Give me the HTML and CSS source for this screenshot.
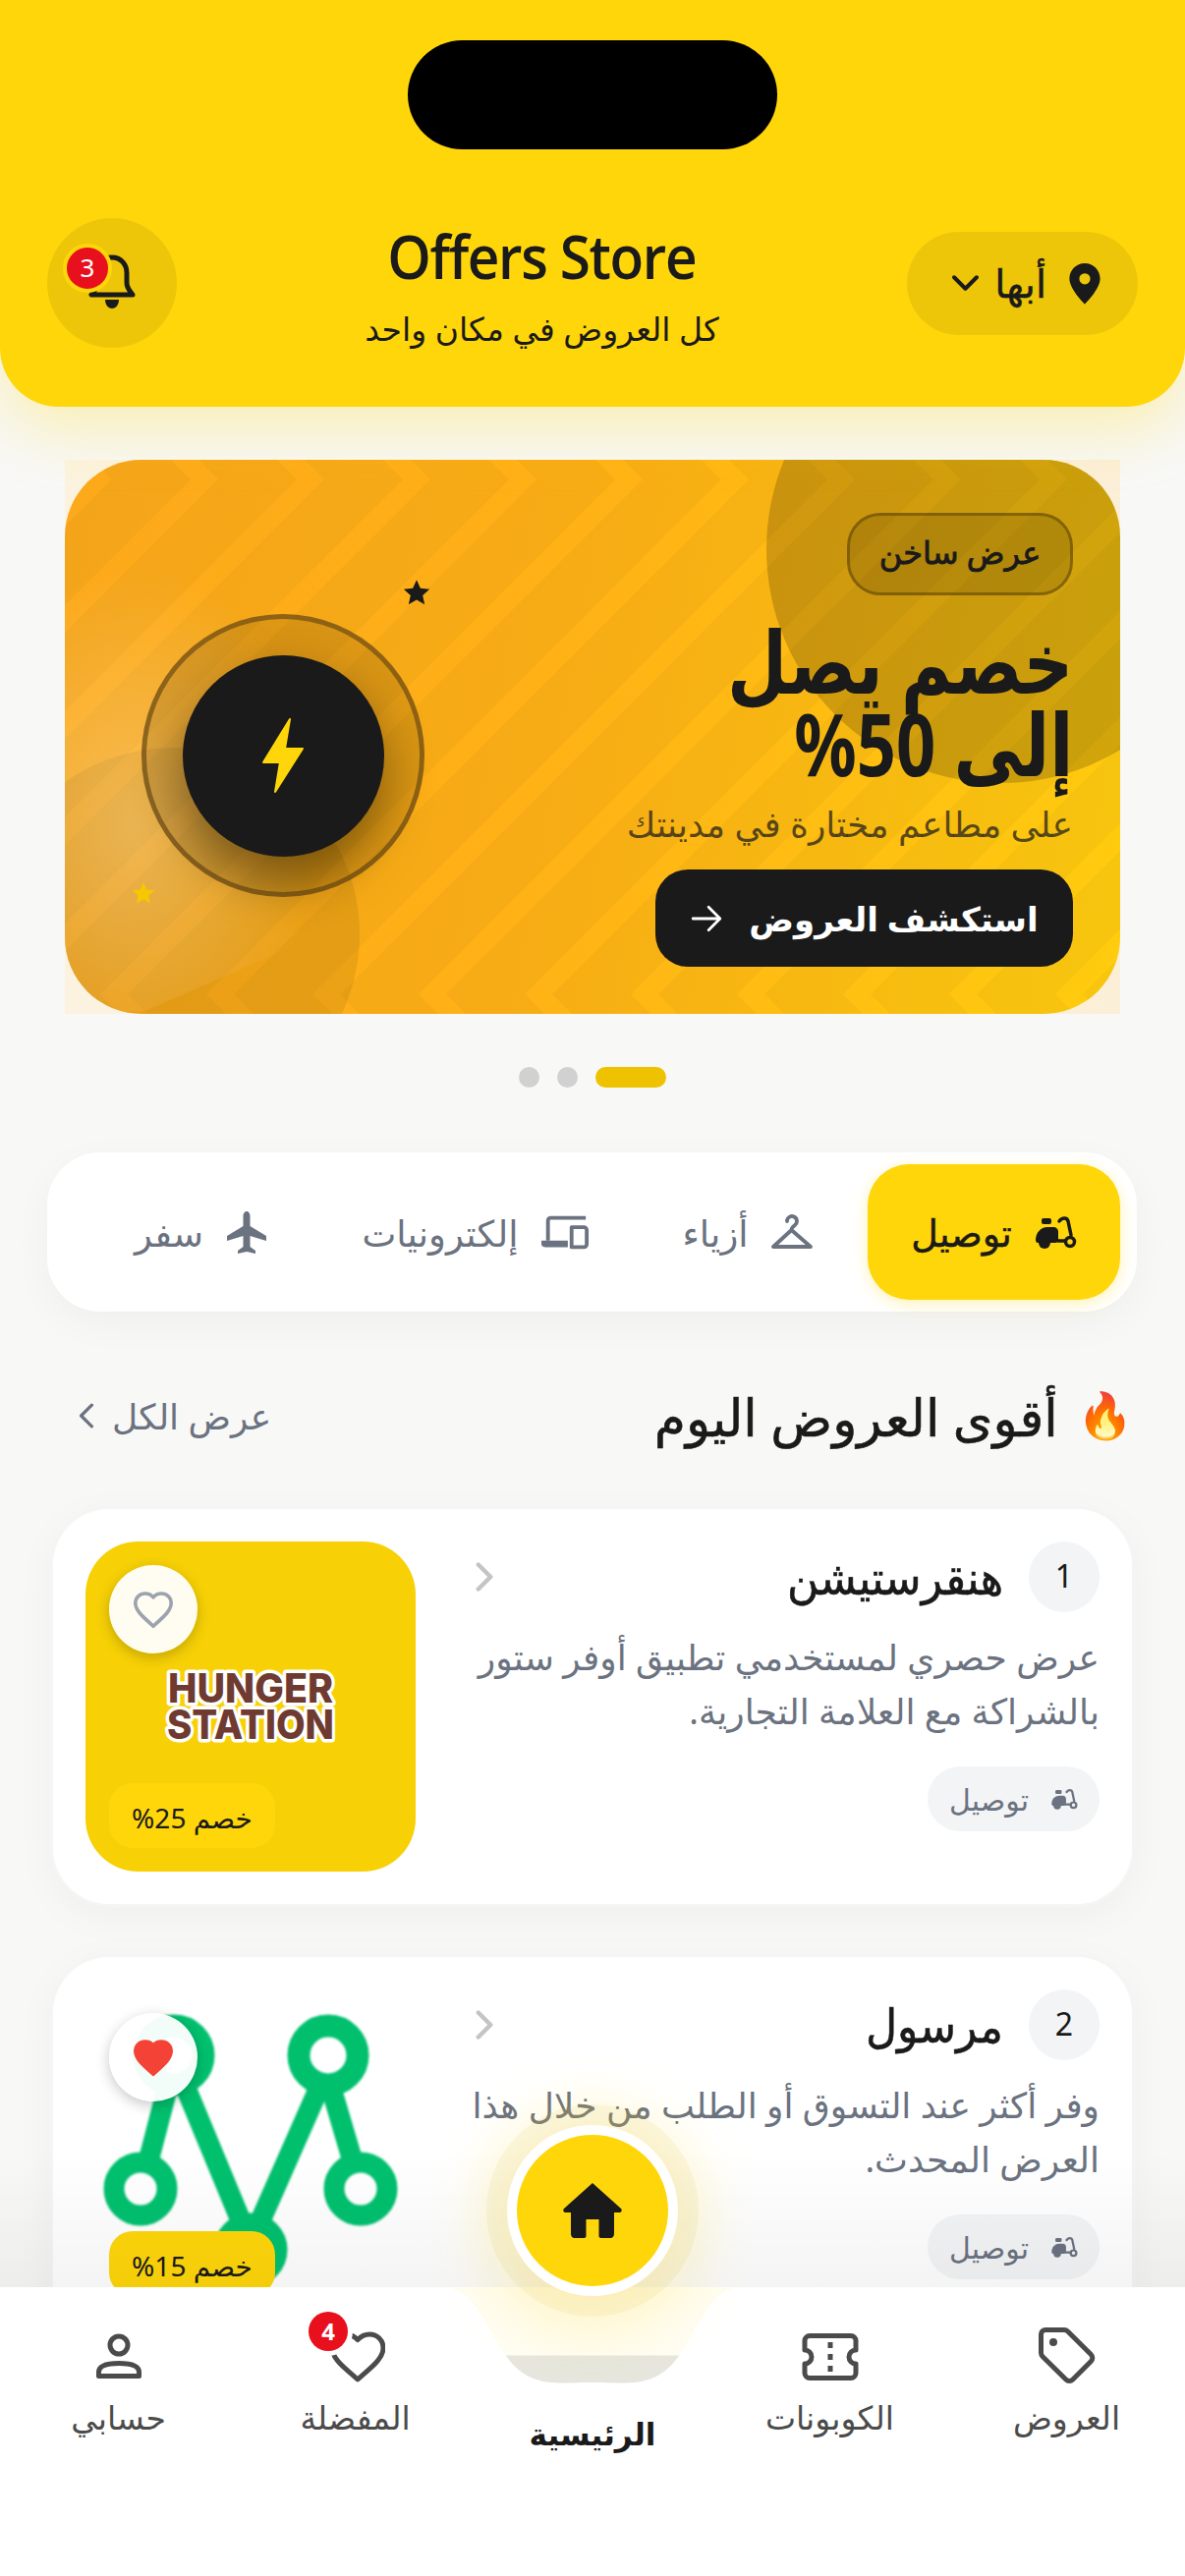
FILE: index.html
```html
<!DOCTYPE html>
<html lang="ar" dir="rtl">
<head>
<meta charset="utf-8">
<title>Offers Store</title>
<link rel="stylesheet" href="styles.css">
</head>
<body>
<div class="screen">
  <header class="top">
    <div class="island"></div>
    <div class="top-row">
      <button class="loc">
        <svg class="ic-pin" viewBox="0 0 24 24"><path fill="#1a1a1a" fill-rule="evenodd" d="M12 2C7.600 2 4.200 5.500 4.200 9.900 4.200 15.200 12 22.800 12 22.800s7.800-7.600 7.800-12.900C19.800 5.500 16.400 2 12 2zm0 10.700a2.800 2.800 0 1 1 0-5.600 2.800 2.800 0 0 1 0 5.600z"/></svg>
        <span class="loc-name">أبها</span>
        <svg class="ic-down" viewBox="0 0 24 14"><path d="M2 2l10 10L22 2" fill="none" stroke="#1a1a1a" stroke-width="3.500" stroke-linecap="round" stroke-linejoin="round"/></svg>
      </button>
      <div class="brand">
        <h1 class="brand-name" dir="ltr">Offers Store</h1>
        <p class="brand-sub">كل العروض في مكان واحد</p>
      </div>
      <div class="bell">
        <svg class="ic-bell" viewBox="0 0 48 60"><path fill="none" stroke="#1a1a1a" stroke-width="5" stroke-linecap="round" stroke-linejoin="round" d="M24 4c-9 0-15 7-15 16v10c0 5-3 8-6 12h42c-3-4-6-7-6-12V20c0-9-6-16-15-16z"/><path fill="#1a1a1a" d="M17 47h14c0 5-3 9-7 9s-7-4-7-9z"/></svg>
        <span class="bell-badge">3</span>
      </div>
    </div>
  </header>

  <section class="slide-wrap">
    <div class="slide">
      <svg class="stripes" viewBox="0 0 1074 564" preserveAspectRatio="none">
        <defs>
          <pattern id="zig" patternUnits="userSpaceOnUse" width="108" height="564">
            <g fill="#000" fill-opacity=".032">
              <path id="st" d="M0 0L20 20-504 544-484 564H-564L-584 544-60 20-80 0z"/>
              <use href="#st" x="108"/><use href="#st" x="216"/><use href="#st" x="324"/><use href="#st" x="432"/><use href="#st" x="540"/><use href="#st" x="648"/>
            </g>
          </pattern>
        </defs>
        <rect width="1074" height="564" fill="url(#zig)"/>
      </svg>
      <div class="blob-tr"></div>
      <div class="blob-bl"></div>
      <div class="blob-light"></div>
      <div class="slide-art">
        <div class="disc"><div class="disc-core">
          <svg class="ic-bolt" viewBox="0 0 44 78"><path fill="#ffd60a" stroke="#ffd60a" stroke-width="2" stroke-linejoin="round" d="M29 2L2 46h17l-5 30 28-44H24z"/></svg>
        </div></div>
        <svg class="star star-dark" viewBox="0 0 24 24"><path fill="#1a1a1a" d="M12 1l3.300 7.400 8 .8-6 5.400 1.700 7.900-7-4.100-7 4.100 1.700-7.900-6-5.400 8-.8z"/></svg>
        <svg class="star star-gold" viewBox="0 0 24 24"><path fill="#f7c700" d="M12 1l3.300 7.400 8 .8-6 5.400 1.700 7.900-7-4.100-7 4.100 1.700-7.900-6-5.400 8-.8z"/></svg>
      </div>
      <div class="slide-text">
        <span class="hot">عرض ساخن</span>
        <h2 class="slide-title">خصم يصل<br>إلى 50%</h2>
        <p class="slide-sub">على مطاعم مختارة في مدينتك</p>
        <button class="cta">استكشف العروض
          <svg class="ic-arrow" viewBox="0 0 32 32"><path d="M3 16H28M18 5L29 16 18 27" fill="none" stroke="#fff" stroke-width="2.600" stroke-linecap="round" stroke-linejoin="round"/></svg>
        </button>
      </div>
    </div>
  </section>

  <div class="dots"><i class="dot"></i><i class="dot"></i><i class="dot dot-on"></i></div>

  <svg class="sprite" width="0" height="0">
    <defs>
      <g id="moto">
        <path fill="currentColor" d="M2 26c0-7 5-13 12-13h6c3 0 5 2 5 5v8c0 2-1 3-3 3H4c-1 0-2-1-2-3z"/>
        <rect x="8" y="4" width="10" height="6" rx="2" fill="currentColor"/>
        <circle cx="11" cy="29" r="6" fill="currentColor"/>
        <circle cx="37" cy="28" r="4.500" fill="none" stroke="currentColor" stroke-width="3.500"/>
        <path fill="none" stroke="currentColor" stroke-width="3.500" stroke-linecap="round" stroke-linejoin="round" d="M26 7c3-4 8-4 9 0l3 14M25 27h7"/>
      </g>
    </defs>
  </svg>

  <nav class="cats">
    <a class="cat cat-on">
      <svg class="ic-cat" viewBox="0 0 44 36"><use href="#moto"/></svg>
      <span>توصيل</span>
    </a>
    <a class="cat cat-2">
      <svg class="ic-cat" viewBox="0 0 44 36"><path fill="none" stroke="#6b7280" stroke-width="3.800" stroke-linecap="round" stroke-linejoin="round" d="M17 7a5 5 0 1 1 8 4c-2 1.500-3.500 2.500-3.500 5L3 33h38L21.500 16"/></svg>
      <span>أزياء</span>
    </a>
    <a class="cat cat-3">
      <svg class="ic-cat ic-wide" viewBox="0 0 52 36"><path fill="none" stroke="#6b7280" stroke-width="4" stroke-linejoin="round" d="M8 27V6a3 3 0 0 1 3-3h37M33 13h13a3 3 0 0 1 3 3v15a3 3 0 0 1-3 3H33z"/><path fill="#6b7280" d="M1 27h28v7H5a4 4 0 0 1-4-4z"/></svg>
      <span>إلكترونيات</span>
    </a>
    <a class="cat cat-4">
      <svg class="ic-cat ic-plane" viewBox="0 0 44 44"><path fill="#6b7280" d="M22 1c-2.200 0-3.500 2.500-3.500 5v10L2 26v5l16.500-5v11L13 41v3l9-2 9 2v-3l-5.500-4V26L42 31v-5L25.500 16V6c0-2.500-1.300-5-3.500-5z"/></svg>
      <span>سفر</span>
    </a>
  </nav>

  <div class="sec-head">
    <h3 class="sec-title"><span class="fire">🔥</span><span>أقوى العروض اليوم</span></h3>
    <a class="sec-all">عرض الكل
      <svg class="ic-more" viewBox="0 0 14 24"><path d="M12 2L2 12l10 10" fill="none" stroke="#6b7280" stroke-width="3" stroke-linecap="round" stroke-linejoin="round"/></svg>
    </a>
  </div>

  <div class="offers">
    <article class="card">
      <div class="card-body">
        <div class="card-head">
          <span class="rank">1</span>
          <h4 class="card-name">هنقرستيشن</h4>
          <svg class="ic-go" viewBox="0 0 14 24"><path d="M2 2l10 10L2 22" fill="none" stroke="#c4c4c4" stroke-width="3.500" stroke-linecap="round" stroke-linejoin="round"/></svg>
        </div>
        <p class="card-desc">عرض حصري لمستخدمي تطبيق أوفر ستور بالشراكة مع العلامة التجارية.</p>
        <span class="tag"><svg class="ic-tagmoto" viewBox="0 0 44 36"><use href="#moto"/></svg>توصيل</span>
      </div>
      <div class="thumb thumb-hs">
        <svg class="logo-hs" viewBox="0 0 186 84" dir="ltr">
          <text class="hs-word" x="93" y="37" textLength="168" lengthAdjust="spacingAndGlyphs">HUNGER</text>
          <text class="hs-word" x="93" y="74" textLength="170" lengthAdjust="spacingAndGlyphs">STATION</text>
        </svg>
        <span class="fav"><svg class="ic-fav" viewBox="0 0 24 22"><path fill="none" stroke="#9ca3af" stroke-width="2" stroke-linejoin="round" d="M12 20.500l-1.400-1.300C5.400 14.500 2 11.400 2 7.600 2 4.500 4.400 2.200 7.500 2.200c1.700 0 3.400.8 4.500 2.100 1.100-1.300 2.800-2.100 4.500-2.100 3.100 0 5.500 2.300 5.500 5.400 0 3.800-3.400 6.900-8.600 11.600z"/></svg></span>
        <span class="off">خصم 25%</span>
      </div>
    </article>

    <article class="card">
      <div class="card-body">
        <div class="card-head">
          <span class="rank">2</span>
          <h4 class="card-name">مرسول</h4>
          <svg class="ic-go" viewBox="0 0 14 24"><path d="M2 2l10 10L2 22" fill="none" stroke="#c4c4c4" stroke-width="3.500" stroke-linecap="round" stroke-linejoin="round"/></svg>
        </div>
        <p class="card-desc">وفر أكثر عند التسوق أو الطلب من خلال هذا العرض المحدث.</p>
        <span class="tag"><svg class="ic-tagmoto" viewBox="0 0 44 36"><use href="#moto"/></svg>توصيل</span>
      </div>
      <div class="thumb">
        <svg class="logo-ms" viewBox="0 0 336 336">
          <filter id="soft"><feGaussianBlur stdDeviation="1.300"/></filter>
          <g fill="none" stroke="#03c06e" filter="url(#soft)">
            <path stroke-width="21" d="M64 175L86 90M100 95L160 240M240 95L176 240M247 90L272 175"/>
            <circle cx="90" cy="67" r="30" stroke-width="23"/><circle cx="247" cy="67" r="30" stroke-width="23"/>
            <circle cx="56" cy="203" r="27" stroke-width="21"/><circle cx="280" cy="203" r="27" stroke-width="21"/>
            <circle cx="168" cy="265" r="27" stroke-width="21"/>
          </g>
        </svg>
        <span class="fav"><svg class="ic-fav" viewBox="0 0 24 22"><path fill="#f44336" stroke="#f44336" stroke-width="2" stroke-linejoin="round" d="M12 20.500l-1.400-1.300C5.400 14.500 2 11.400 2 7.600 2 4.500 4.400 2.200 7.500 2.200c1.700 0 3.400.8 4.500 2.100 1.100-1.300 2.800-2.100 4.500-2.100 3.100 0 5.500 2.300 5.500 5.400 0 3.800-3.400 6.900-8.600 11.600z"/></svg></span>
        <span class="off">خصم 15%</span>
      </div>
    </article>
  </div>

  <div class="fade"></div>

  <footer class="tabbar">
    <svg class="tabbar-bg" viewBox="0 0 1206 294" preserveAspectRatio="none">
      <defs>
        <linearGradient id="pit" x1="0" y1="0" x2="0" y2="1">
          <stop offset="0" stop-color="#fffdf2"/><stop offset=".69" stop-color="#fffdf2"/><stop offset=".7" stop-color="#e6e6de"/><stop offset="1" stop-color="#e6e6de"/>
        </linearGradient>
      </defs>
      <path fill="url(#pit)" d="M440 0h326v100H440z"/>
      <path fill="#fff" d="M0 0H450C480 0 490 30 510 62 535 105 565 97 603 97 641 97 671 105 696 62 716 30 726 0 756 0H1206V294H0z"/>
    </svg>
    <a class="tab">
      <svg class="ic-tab" viewBox="0 0 60 60"><path fill="none" stroke="#4b4b4b" stroke-width="5" stroke-linejoin="round" d="M8 3.500h19c1.500 0 2.800.6 3.900 1.700l23.400 23.400c2 2 2 5 0 7L35.800 54.100c-2 2-5 2-7 0L5.200 30.700C4.100 29.600 3.500 28.300 3.500 27V8c0-2.500 2-4.500 4.500-4.500z"/><circle cx="16" cy="16" r="4" fill="#4b4b4b"/></svg>
      <span>العروض</span>
    </a>
    <a class="tab">
      <svg class="ic-tab" viewBox="0 0 60 60"><path fill="none" stroke="#4b4b4b" stroke-width="5" stroke-linejoin="round" d="M9 9.500h42a5 5 0 0 1 5 5V24a7 7 0 0 0 0 14v9.500a5 5 0 0 1-5 5H9a5 5 0 0 1-5-5V38a7 7 0 0 0 0-14v-9.500a5 5 0 0 1 5-5z"/><path fill="#4b4b4b" d="M27.500 16h5v6h-5zM27.500 28h5v6h-5zM27.500 40h5v6h-5z"/></svg>
      <span>الكوبونات</span>
    </a>
    <a class="tab tab-home">
      <span class="fab"><svg class="ic-home" viewBox="0 0 62 56"><path fill="#1a1a1a" d="M31 0L2 26c-1.500 1.500-.5 4 1.500 4H9v22c0 2 1.500 4 3.500 4h10c1 0 2-1 2-2V37h13v17c0 1 1 2 2 2h10c2 0 3.500-2 3.500-4V30h5.500c2 0 3-2.500 1.500-4z"/></svg></span>
      <span class="tab-home-label">الرئيسية</span>
    </a>
    <a class="tab">
      <svg class="ic-tab" viewBox="-2 0 60 60"><path fill="none" stroke="#4b4b4b" stroke-width="5" stroke-linejoin="round" d="M30 54l-4-3.600C12 38.600 4 31.200 4 21.800 4 14 10 8 17.800 8c4.500 0 9 2.100 12.200 5.600C33.200 10.100 37.700 8 42.200 8 50 8 56 14 56 21.800c0 9.400-8 16.800-22 28.600z"/></svg>
      <span>المفضلة</span>
      <b class="tab-badge">4</b>
    </a>
    <a class="tab">
      <svg class="ic-tab" viewBox="0 0 60 60"><circle cx="30" cy="19" r="9" fill="none" stroke="#4b4b4b" stroke-width="5"/><path fill="none" stroke="#4b4b4b" stroke-width="5" stroke-linejoin="round" d="M9.500 50.500v-4c0-6 8-9 20.500-9s20.500 3 20.500 9v4z"/></svg>
      <span>حسابي</span>
    </a>
  </footer>
</div>
</body>
</html>
```

FILE: styles.css
```css
* { box-sizing: border-box; }
html, body { margin: 0; padding: 0; }
body { font-family: "Noto Sans", "DejaVu Sans", sans-serif; color: #1a1a1a; }
h1, h2, h3, h4, p { margin: 0; font-weight: inherit; }
button { font: inherit; border: 0; padding: 0; }
.sprite { position: absolute; }

.screen { position: relative; width: 1206px; height: 2622px; overflow: hidden; background: #f8f8f6; }

.top { height: 414px; background: #ffd60a; border-radius: 0 0 60px 60px; box-shadow: 0 24px 60px rgba(255, 214, 10, .28); position: relative; z-index: 2; padding-top: 41px; }
.island { width: 376px; height: 111px; margin: 0 auto; background: #000; border-radius: 56px; }
.top-row { display: flex; align-items: center; justify-content: space-between; margin-top: 70px; padding: 0 48px; }
.loc { display: flex; align-items: center; width: 235px; height: 105px; padding: 0 30px; gap: 15px; border-radius: 53px; background: rgba(0, 0, 0, .07); color: #1a1a1a; }
.ic-pin { width: 48px; height: 48px; }
.loc-name { font-size: 40px; line-height: 50px; -webkit-text-stroke: .5px currentColor; }
.ic-down { width: 29px; height: 16px; }
.brand { text-align: center; }
.brand-name { font-size: 61px; line-height: 70px; font-weight: 600; letter-spacing: -1.500px; font-family: "Open Sans", sans-serif; margin-top: -8px; transform: scaleX(.93); }
.brand-sub { font-size: 33px; line-height: 46px; margin-top: 16px; margin-bottom: -16px; }
.bell { position: relative; width: 132px; height: 132px; border-radius: 50%; background: rgba(0, 0, 0, .07); display: flex; align-items: center; justify-content: center; }
.ic-bell { width: 48px; height: 60px; }
.bell-badge { position: absolute; left: 16px; top: 26px; width: 50px; height: 50px; border: 4px solid #ffd60a; border-radius: 50%; background: #e8101c; color: #fff; font-size: 26px; line-height: 40px; text-align: center; }

.slide-wrap { margin: 54px 66px 0; height: 564px; background: linear-gradient(90deg, #fbf3e0, #fbefd8); }
.slide { position: relative; height: 564px; border-radius: 78px; overflow: hidden; background: linear-gradient(100deg, #fca91b 0%, #ffb116 45%, #ffcc0e 100%); display: flex; justify-content: space-between; }
.stripes { position: absolute; inset: 0; width: 100%; height: 100%; }
.blob-tr { position: absolute; right: -116px; top: -147px; width: 476px; height: 476px; border-radius: 50%; background: rgba(0, 0, 0, .18); }
.blob-bl { position: absolute; left: -80px; top: 293px; width: 380px; height: 380px; border-radius: 50%; background: rgba(0, 0, 0, .07); }
.blob-light { position: absolute; left: 0; top: 100px; width: 300px; height: 464px; background: radial-gradient(ellipse 190px 260px at 70px 270px, rgba(255, 255, 255, .26), rgba(255, 255, 255, 0)); clip-path: polygon(0 0, 100% 0, 100% 365px, 212px 404px, 82px 461px, 0 100%); }
.slide-text { position: relative; display: flex; flex-direction: column; align-items: flex-start; padding: 54px 48px 0 0; width: 560px; }
.hot { display: block; height: 84px; width: 230px; border: 3px solid rgba(70, 50, 0, .45); border-radius: 34px; background: rgba(0, 0, 0, .12); font-size: 32px; line-height: 74px; text-align: center; -webkit-text-stroke: .9px currentColor; }
.slide-title { font-size: 88px; line-height: 84px; font-weight: 700; margin-top: 24px; transform: scaleX(.8); transform-origin: right center; white-space: nowrap; }
.slide-sub { font-size: 36px; line-height: 52px; color: rgba(26, 26, 26, .72); margin-top: 15px; white-space: nowrap; }
.cta { display: flex; align-items: center; justify-content: center; gap: 26px; width: 425px; height: 99px; border-radius: 33px; background: #1a1a1a; color: #fff; font-size: 34px; font-weight: 700; margin-top: 20px; }
.ic-arrow { width: 34px; height: 34px; }
.slide-art { position: absolute; inset: 0; }
.disc { position: absolute; left: 78px; top: 157px; width: 288px; height: 288px; border-radius: 50%; border: 5px solid rgba(110, 75, 20, .7); background: rgba(0, 0, 0, .12); display: flex; align-items: center; justify-content: center; }
.disc-core { width: 205px; height: 205px; border-radius: 50%; background: #1a1a1a; box-shadow: 0 24px 50px rgba(0, 0, 0, .4); display: flex; align-items: center; justify-content: center; }
.ic-bolt { width: 44px; height: 78px; }
.star { position: absolute; }
.star-dark { left: 344px; top: 121px; width: 28px; height: 28px; }
.star-gold { left: 68px; top: 429px; width: 24px; height: 24px; }

.dots { display: flex; align-items: center; justify-content: center; gap: 18px; margin-top: 54px; height: 21px; direction: ltr; }
.dot { width: 21px; height: 21px; border-radius: 50%; background: #d1d1d1; }
.dot-on { width: 72px; border-radius: 11px; background: #efc200; }

.cats { display: flex; align-items: center; height: 162px; margin: 66px 49px 0 48px; padding: 0 17px; border-radius: 54px; background: #fff; box-shadow: 0 12px 40px rgba(0, 0, 0, .04); }
.cat { display: flex; align-items: center; justify-content: center; gap: 22px; height: 138px; font-size: 37px; color: #6b7280; }
.cat-on { width: 257px; font-size: 38px; border-radius: 42px; background: #ffd60a; color: #1a1a1a; box-shadow: 0 4px 16px rgba(255, 214, 10, .3); -webkit-text-stroke: .5px currentColor; }
.cat-2 { width: 244px; }
.cat-3 { width: 310px; }
.cat-4 { width: 248px; }
.ic-cat { width: 44px; height: 36px; }
.ic-wide { width: 50px; }
.ic-plane { height: 44px; }

.sec-head { display: flex; align-items: center; justify-content: space-between; margin: 66px 52px 0 80px; height: 80px; }
.sec-title { display: flex; align-items: center; gap: 20px; font-size: 52px; -webkit-text-stroke: .6px currentColor; }
.fire { font-size: 46px; font-family: "Noto Color Emoji", sans-serif; -webkit-text-stroke: 0; }
.sec-all { display: flex; align-items: center; gap: 18px; font-size: 36px; color: #6b7280; }
.ic-more { width: 16px; height: 26px; }

.offers { display: flex; flex-direction: column; gap: 48px; margin: 52px 51px 0; }
.card { display: flex; justify-content: space-between; height: 408px; padding: 33px; border-radius: 60px; background: #fff; border: 3px solid rgba(0, 0, 0, .04); box-shadow: 0 10px 40px rgba(0, 0, 0, .04); }
.card-body { flex: 1; display: flex; flex-direction: column; align-items: flex-start; }
.card-head { display: flex; align-items: center; width: 100%; height: 72px; gap: 26px; padding-left: 60px; }
.rank { flex: none; width: 72px; height: 72px; border-radius: 50%; background: #f3f4f6; font-size: 32px; line-height: 70px; text-align: center; }
.card-name { flex: 1; font-size: 47px; line-height: 60px; transform: scaleX(.94); transform-origin: right center; -webkit-text-stroke: .6px currentColor; }
.ic-go { width: 20px; height: 30px; }
.card-desc { font-size: 36px; line-height: 55px; color: #6b7280; margin-top: 18px; height: 110px; }
.tag { display: flex; align-items: center; gap: 22px; height: 66px; padding: 0 22px; border-radius: 33px; background: #f3f4f6; color: #6b7280; font-size: 30px; margin-top: 29px; }
.ic-tagmoto { width: 28px; height: 24px; }
.thumb { position: relative; flex: none; width: 336px; height: 336px; border-radius: 54px; display: flex; align-items: center; justify-content: center; }
.thumb-hs { background: #f7d106; }
.logo-hs { width: 186px; height: 84px; margin-top: 2px; overflow: visible; }
.hs-word { font-family: "Inter", sans-serif; font-weight: 800; font-size: 41px; text-anchor: middle; fill: #6f3b30; stroke: #fff; stroke-width: 7px; paint-order: stroke fill; stroke-linejoin: round; }
.logo-ms { width: 336px; height: 336px; }
.fav { position: absolute; left: 24px; top: 24px; width: 90px; height: 90px; border-radius: 50%; background: rgba(255, 255, 255, .95); box-shadow: 0 4px 14px rgba(0, 0, 0, .22); display: flex; align-items: center; justify-content: center; }
.ic-fav { width: 44px; height: 40px; }
.off { position: absolute; left: 24px; bottom: 24px; width: 169px; height: 66px; border-radius: 24px; background: #ffd60a; font-size: 28px; line-height: 70px; text-align: center; }

.fade { position: absolute; left: 0; right: 0; top: 2188px; height: 140px; background: linear-gradient(rgba(0, 0, 0, 0), rgba(0, 0, 0, .045)); pointer-events: none; }
.tabbar { position: absolute; left: 0; right: 0; top: 2328px; height: 294px; display: grid; grid-template-columns: 241px 241px 242px 241px 241px; }
.tabbar-bg { position: absolute; inset: 0; width: 100%; height: 100%; }
.tab { position: relative; display: flex; flex-direction: column; align-items: center; padding-top: 40px; font-size: 33px; color: #4b4b4b; }
.ic-tab { width: 60px; height: 60px; }
.tab span { line-height: 50px; margin-top: 8px; }
.tab-home { color: #1a1a1a; }
.tab-home .tab-home-label { font-weight: 700; font-size: 31px; margin-top: 0; padding-top: 84px; }
.tab-home .fab { position: absolute; top: -165px; left: 34px; width: 174px; height: 174px; margin: 0; line-height: normal; border: 10px solid #fff; border-radius: 50%; background: #ffd60a; box-shadow: 0 0 0 21px rgba(214, 190, 60, .1), 0 8px 60px 24px rgba(255, 214, 10, .2); display: flex; align-items: center; justify-content: center; }
.ic-home { width: 62px; height: 56px; }
.tab-badge { position: absolute; left: 73px; top: 25px; width: 40px; height: 40px; border-radius: 50%; background: #e8101c; color: #fff; font-size: 24px; line-height: 40px; text-align: center; box-shadow: 0 0 0 5px #fff; }
```
